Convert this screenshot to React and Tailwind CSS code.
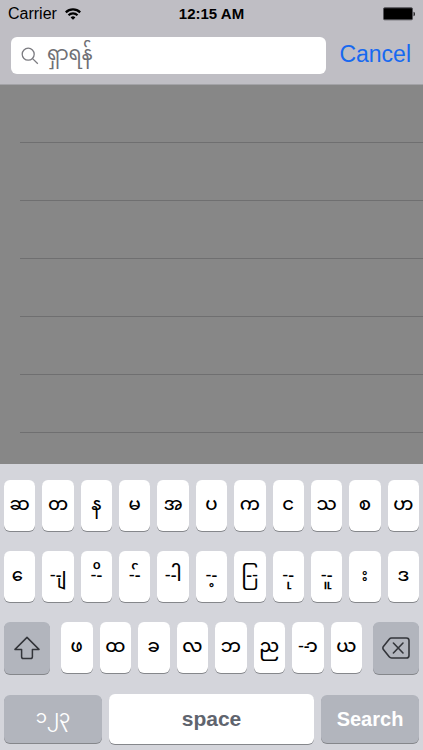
import { useState } from 'react'

const TOP_ROW = ['ဆ', 'တ', 'န', 'မ', 'အ', 'ပ', 'က', 'င', 'သ', 'စ', 'ဟ']
// vowel signs that stand alone are carried by a no-break space
const MIDDLE_ROW = ['\u00a0ေ', '--ျ', '--ိ', '--်', '--ါ', '--့', '-ြ-', '--ု', '--ူ', '\u00a0း\u00a0', 'ဒ']
const BOTTOM_ROW = ['ဖ', 'ထ', 'ခ', 'လ', 'ဘ', 'ည', '--ာ', 'ယ']

function StatusBar() {
  return (
    <div className="grid grid-cols-3 items-center h-7 px-2 text-base text-black">
      <div className="flex items-center gap-2">
        <span>Carrier</span>
        <svg className="w-4 h-3" viewBox="0 0 16 12" fill="none" stroke="#000" strokeWidth="2.2">
          <path d="M0.8 4.4a10.2 10.2 0 0 1 14.4 0" />
          <path d="M3.5 7.2a6.4 6.4 0 0 1 9 0" />
          <path d="M8 11.8 5.6 9.4a3.4 3.4 0 0 1 4.8 0z" fill="#000" stroke="none" />
        </svg>
      </div>
      <span className="text-center text-[15px] font-bold whitespace-nowrap">12:15 AM</span>
      <svg className="w-8 h-3.5 justify-self-end" viewBox="0 0 32 14">
        <rect x="0.5" y="0.8" width="29" height="12" rx="1.2" fill="#000" stroke="#55555a" />
        <path d="M30.6 4.8c1.6.4 1.6 4 0 4.4z" fill="#000" />
      </svg>
    </div>
  )
}

function Key({ label }) {
  return (
    <button
      type="button"
      className="flex-1 min-w-0 h-[51px] pb-1 flex items-center justify-center rounded-md bg-white text-lg font-medium text-black whitespace-nowrap shadow-[0_1px_0_#85878b]"
    >
      {label}
    </button>
  )
}

function App() {
  const [query, setQuery] = useState('')

  return (
    <div className="w-full bg-[#878787] font-['Liberation_Sans','Noto_Sans_Myanmar','Noto_Sans',sans-serif]">
      <header className="bg-[#bfbec4] border-b border-[#a3a3a7]">
        <StatusBar />
        <div className="flex items-center gap-[13px] pl-[11px] pr-3 pt-[9px] pb-[10px]">
          <label className="flex-1 min-w-0 flex items-center gap-2 h-[37px] px-[10px] rounded-md bg-white">
            <svg className="w-[18px] h-[18px] shrink-0" viewBox="0 0 18 18" fill="none" stroke="#7b7b80" strokeWidth="1.3">
              <circle cx="7.2" cy="7.2" r="6" />
              <path d="M11.6 11.6 16.8 16.8" />
            </svg>
            <input
              type="search"
              aria-label="ရှာရန်"
              placeholder="ရှာရန်"
              value={query}
              onChange={(e) => setQuery(e.target.value)}
              className="flex-1 min-w-0 h-full pb-1 text-[19px] text-black placeholder-[#6f6f74] outline-none"
            />
          </label>
          <button type="button" onClick={() => setQuery('')} className="pb-1 text-[23px] leading-6 text-[#1769f0]">
            Cancel
          </button>
        </div>
      </header>

      {/* Empty list behind the keyboard */}
      <ul className="pl-5 pb-[31px]">
        {[1, 2, 3, 4, 5, 6].map((row) => (
          <li key={row} className="h-[58px] border-b border-[#6f6f70]" />
        ))}
      </ul>

      {/* Keyboard */}
      <div className="bg-[#d4d5db] px-1 pt-4 pb-[6px]">
        <div className="flex gap-[7px]">
          {TOP_ROW.map((label) => <Key key={label} label={label} />)}
        </div>
        <div className="flex gap-[7px] mt-5">
          {MIDDLE_ROW.map((label) => <Key key={label} label={label} />)}
        </div>
        <div className="flex gap-[11px] mt-5">
          <button type="button" aria-label="Shift" className="w-[46px] h-[52px] flex items-center justify-center rounded-md bg-[#b2b5bd] shadow-[0_1px_0_#85878b]">
            <svg className="w-[26px] h-6" viewBox="0 0 26 24" fill="none" stroke="#33353a" strokeWidth="1.5" strokeLinejoin="round">
              <path d="M13 1.4 1 13.4h6.6v7.400q0 1.800 1.800 1.800h7.200q1.800 0 1.800-1.800v-7.400H25z" />
            </svg>
          </button>
          <div className="flex-1 min-w-0 flex gap-[7px]">
            {BOTTOM_ROW.map((label) => <Key key={label} label={label} />)}
          </div>
          <button type="button" aria-label="Delete" className="w-[46px] h-[52px] flex items-center justify-center rounded-md bg-[#b2b5bd] shadow-[0_1px_0_#85878b]">
            <svg className="w-7 h-[22px]" viewBox="0 0 28 22" fill="none" stroke="#33353a" strokeWidth="1.6" strokeLinejoin="round" strokeLinecap="round">
              <path d="M9.6 1H24.4q2.600 0 2.600 2.600v14.800q0 2.600-2.600 2.600H9.600q-1.400 0-2.400-1.200L1.400 12.600q-1-1.600 0-3.200L7.200 2.200Q8.200 1 9.600 1z" />
              <path d="M11.4 6 21 16M21 6 11.4 16" />
            </svg>
          </button>
        </div>
        <div className="flex items-center gap-[7px] mt-5">
          <button type="button" className="w-[98px] h-12 pb-1 rounded-md bg-[#b2b5bd] text-lg text-white shadow-[0_1px_0_#85878b]">
            ၁၂၃
          </button>
          <button type="button" className="flex-1 h-[50px] rounded-md bg-white text-[21px] font-bold text-[#5f646e] shadow-[0_1px_0_#85878b]">
            space
          </button>
          <button type="button" className="w-[98px] h-12 rounded-md bg-[#b2b5bd] text-xl font-bold text-white shadow-[0_1px_0_#85878b]">
            Search
          </button>
        </div>
      </div>
    </div>
  )
}

export default App
